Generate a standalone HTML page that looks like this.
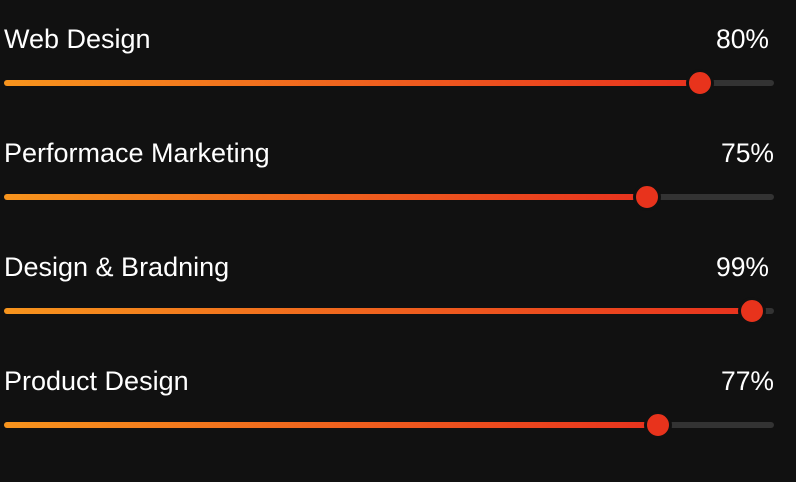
<!DOCTYPE html>
<html><head><style>
html,body{margin:0;padding:0;background:#111111;width:796px;height:482px;overflow:hidden;font-family:"Liberation Sans",sans-serif;color:#fff}
.row{position:absolute;left:0;width:796px;height:114px}
.lbl{position:absolute;left:4px;top:10px;font-size:27px;line-height:30px}
.pct{position:absolute;right:27px;top:10px;font-size:26.5px;line-height:30px}
.track{position:absolute;left:4px;width:770px;top:66px;height:6px;border-radius:3px;background:#333}
.fill{position:absolute;left:4px;top:66px;height:6px;border-radius:3px;background:linear-gradient(90deg,#f7941d,#e8321e)}
.thumb{position:absolute;top:55px;width:22px;height:22px;border-radius:50%;background:#e8331c;border:3px solid #111}
</style></head><body>
<div class="row" style="top:14px"><div class="lbl">Web Design</div><div class="pct">80%</div><div class="track"></div><div class="fill" style="width:696px"></div><div class="thumb" style="left:686px"></div></div>
<div class="row" style="top:128px"><div class="lbl">Performace Marketing</div><div class="pct" style="right:22px">75%</div><div class="track"></div><div class="fill" style="width:643px"></div><div class="thumb" style="left:633px"></div></div>
<div class="row" style="top:242px"><div class="lbl">Design &amp; Bradning</div><div class="pct" style="right:27px">99%</div><div class="track"></div><div class="fill" style="width:748px"></div><div class="thumb" style="left:738px"></div></div>
<div class="row" style="top:356px"><div class="lbl">Product Design</div><div class="pct" style="right:22px">77%</div><div class="track"></div><div class="fill" style="width:654px"></div><div class="thumb" style="left:644px"></div></div>
</body></html>
